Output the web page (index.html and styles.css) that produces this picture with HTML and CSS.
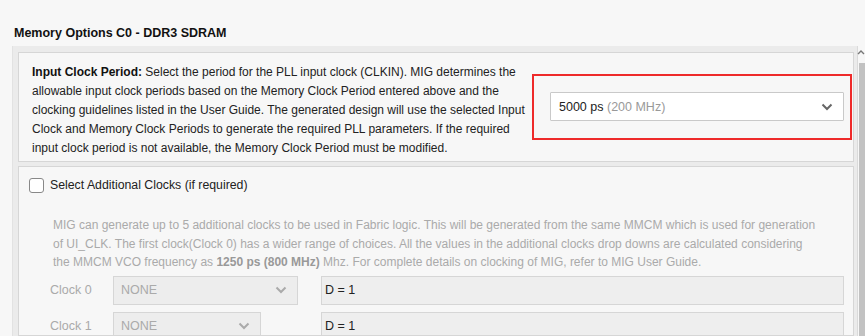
FILE: index.html
```html
<!DOCTYPE html>
<html>
<head>
<meta charset="utf-8">
<link rel="stylesheet" href="styles.css">
</head>
<body>
<div class="page">
  <div class="main">
    <div class="title">Memory Options C0 - DDR3 SDRAM</div>
    <div class="frame">
      <div class="panel p1">
        <div class="intro">
          <b>Input Clock Period:</b> Select the period for the PLL input clock (CLKIN). MIG determines the<br>
          allowable input clock periods based on the Memory Clock Period entered above and the<br>
          clocking guidelines listed in the User Guide. The generated design will use the selected Input<br>
          Clock and Memory Clock Periods to generate the required PLL parameters. If the required<br>
          input clock period is not available, the Memory Clock Period must be modified.
        </div>
        <div class="highlight">
          <div class="select">
            <span class="val">5000 ps <span class="muted">(200 MHz)</span></span>
            <svg class="chev" width="12" height="8" viewBox="0 0 12 8"><path d="M1.5 1.5 L6 6 L10.5 1.5" fill="none" stroke="#666" stroke-width="2"/></svg>
          </div>
        </div>
      </div>
      <div class="panel p2">
        <label class="check-row"><span class="box"></span><span>Select Additional Clocks (if required)</span></label>
        <div class="desc">
          MIG can generate up to 5 additional clocks to be used in Fabric logic. This will be generated from the same MMCM which is used for generation<br>
          of UI_CLK. The first clock(Clock 0) has a wider range of choices. All the values in the additional clocks drop downs are calculated considering<br>
          the MMCM VCO frequency as <b>1250 ps (800 MHz)</b> Mhz. For complete details on clocking of MIG, refer to MIG User Guide.
        </div>
        <div class="clock-row first">
          <span class="clabel">Clock 0</span>
          <div class="dsel w0"><span>NONE</span><svg class="chev" width="12" height="8" viewBox="0 0 12 8"><path d="M1.5 1.5 L6 6 L10.5 1.5" fill="none" stroke="#aaa" stroke-width="2"/></svg></div>
          <div class="dinput">D = 1</div>
        </div>
        <div class="clock-row">
          <span class="clabel">Clock 1</span>
          <div class="dsel w1"><span>NONE</span><svg class="chev" width="12" height="8" viewBox="0 0 12 8"><path d="M1.5 1.5 L6 6 L10.5 1.5" fill="none" stroke="#aaa" stroke-width="2"/></svg></div>
          <div class="dinput">D = 1</div>
        </div>
      </div>
    </div>
  </div>
  <div class="scrollbar">
    <svg class="up" width="8" height="6" viewBox="0 0 8 6"><path d="M1 5 L4 2 L7 5" fill="none" stroke="#777" stroke-width="1.4"/></svg>
    <div class="thumb"></div>
  </div>
</div>
</body>
</html>
```
FILE: styles.css
```css
html, body {
  margin: 0;
  padding: 0;
  background: #f7f7f7;
  overflow: hidden;
}
body {
  font-family: "Liberation Sans", Arial, sans-serif;
  color: #222;
  font-size: 12px;
}
.page {
  display: flex;
  width: 865px;
  height: 336px;
  overflow: hidden;
}
.main {
  width: 857px;
  display: flex;
  flex-direction: column;
  min-height: 0;
}
.title {
  flex-shrink: 0;
  font-weight: bold;
  font-size: 12.5px;
  padding: 26px 0 0 14px;
  height: 20px;
  line-height: 15px;
  color: #111;
}
.frame {
  margin-left: 12px;
  width: 836px;
  padding: 6px 3px 0 5px;
  background: #ebebeb;
  border-left: 1px solid #e2e2e2;
  border-right: 1px solid #dadada;
  display: flex;
  flex-direction: column;
  gap: 4px;
  flex: 1;
  min-height: 0;
}
.panel {
  background: #f7f7f7;
  border: 1px solid #d6d6d6;
}
.p1 {
  flex-shrink: 0;
  height: 108px;
  display: flex;
  align-items: flex-start;
}
.intro {
  padding: 10px 0 0 13px;
  line-height: 19px;
  white-space: nowrap;
  color: #222;
}
.intro b { color: #111; }
.highlight {
  flex-shrink: 0;
  margin: 21px 1px 0 auto;
  width: 320px;
  height: 66px;
  border: 2px solid #ee2a2a;
  padding: 16px 6px 0 16px;
  box-sizing: border-box;
}
.select {
  height: 29px;
  box-sizing: border-box;
  background: #fff;
  border: 1px solid #c9c9c9;
  display: flex;
  align-items: center;
  justify-content: space-between;
  padding: 0 10px 0 8px;
  border-radius: 1px;
  font-size: 12.5px;
}
.val { color: #222; }
.muted { color: #999; }
.p2 {
  flex: 1;
  min-height: 0;
  overflow: hidden;
  padding: 10px 0 0 10px;
}
.check-row {
  display: flex;
  align-items: center;
  gap: 6px;
  height: 16px;
  color: #222;
  font-size: 12.3px;
}
.box {
  width: 13px;
  height: 13px;
  border: 1.5px solid #888;
  border-radius: 3px;
  background: #fff;
}
.desc {
  margin: 23px 0 0 24px;
  line-height: 18.5px;
  white-space: nowrap;
  color: #aaa;
}
.desc b { color: #999; }
.clock-row {
  display: flex;
  align-items: center;
  height: 29px;
  margin-top: 7px;
  padding-left: 21px;
}
.clock-row.first { margin-top: 4px; }
.clabel {
  width: 63px;
  color: #aaa;
  font-size: 12.5px;
}
.dsel {
  height: 29px;
  box-sizing: border-box;
  background: #ededed;
  border: 1px solid #d6d6d6;
  display: flex;
  align-items: center;
  justify-content: space-between;
  padding: 0 10px 0 7px;
  color: #aaa;
  font-size: 12.5px;
}
.w0 { width: 185px; margin-right: 23px; }
.w1 { width: 148px; margin-right: 60px; }
.dinput {
  width: 523px;
  height: 29px;
  box-sizing: border-box;
  background: #eeeeee;
  border: 1px solid #d6d6d6;
  display: flex;
  align-items: center;
  padding-left: 3px;
  color: #222;
  font-size: 12.5px;
}
.scrollbar {
  width: 8px;
  display: flex;
  flex-direction: column;
  align-items: center;
  padding-top: 49px;
}
.up { margin-bottom: 8px; }
.thumb {
  width: 6px;
  margin-left: 2px;
  flex: 1;
  background: #c2c2c2;
}
```
